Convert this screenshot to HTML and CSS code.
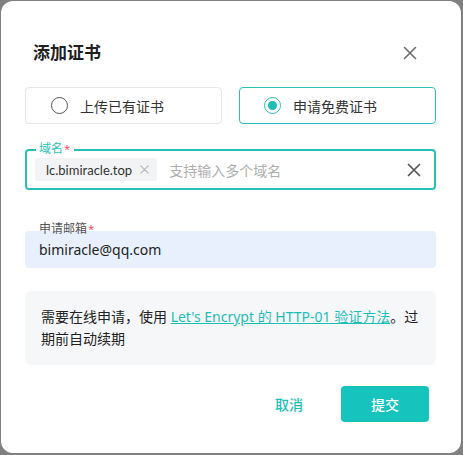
FILE: index.html
```html
<!DOCTYPE html>
<html lang="zh">
<head>
<meta charset="utf-8">
<link rel="stylesheet" href="styles.css">
</head>
<body>
<div class="dialog">
  <div class="header">
    <h1 class="title">添加证书</h1>
    <svg class="close" width="14" height="14" viewBox="0 0 14 14"><path d="M1.5 1.5L12.5 12.5M12.5 1.5L1.5 12.5" stroke="#6b6b6b" stroke-width="1.6" stroke-linecap="round"/></svg>
  </div>
  <div class="radios">
    <div class="radio-card">
      <span class="radio"></span>
      <span class="radio-label">上传已有证书</span>
    </div>
    <div class="radio-card selected">
      <span class="radio on"><span class="dot"></span></span>
      <span class="radio-label">申请免费证书</span>
    </div>
  </div>
  <div class="field domain">
    <span class="legend">域名<span class="req">*</span></span>
    <span class="chip">lc.bimiracle.top<svg class="chip-x" width="9" height="9" viewBox="0 0 9 9"><path d="M0.8 0.8L8.2 8.2M8.2 0.8L0.8 8.2" stroke="#b3b3b3" stroke-width="1.1" stroke-linecap="round"/></svg></span>
    <span class="placeholder">支持输入多个域名</span>
    <svg class="clear" width="14" height="14" viewBox="0 0 14 14"><path d="M1.5 1.5L12.5 12.5M12.5 1.5L1.5 12.5" stroke="#555" stroke-width="1.7" stroke-linecap="round"/></svg>
  </div>
  <div class="field email">
    <span class="email-label">申请邮箱<span class="req">*</span></span>
    <span class="email-value">bimiracle@qq.com</span>
  </div>
  <div class="info">需要在线申请，使用 <a class="link" href="#">Let's Encrypt 的 HTTP-01 验证方法</a>。过期前自动续期</div>
  <div class="footer">
    <button class="btn cancel">取消</button>
    <button class="btn submit">提交</button>
  </div>
</div>
</body>
</html>
```
FILE: styles.css
```css
html, body {
  margin: 0;
  padding: 0;
  background: #808080;
}
body {
  font-family: "Noto Sans", "Noto Sans CJK SC", sans-serif;
  width: 463px;
  height: 455px;
  overflow: hidden;
}
.dialog {
  box-sizing: border-box;
  margin: 1px 0 0 1px;
  width: 460px;
  height: 452px;
  background: #fff;
  border-radius: 12px;
  padding: 40px 25px 0 24px;
}
.header {
  display: flex;
  align-items: center;
  justify-content: space-between;
  height: 24px;
  padding: 0 19px 0 8px;
}
.title {
  margin: 0;
  font-size: 17px;
  font-weight: 600;
  color: #1f1f1f;
  line-height: 24px;
}
.close {
  display: block;
}
.radios {
  display: grid;
  grid-template-columns: 1fr 1fr;
  column-gap: 17px;
  margin-top: 22px;
}
.radio-card {
  box-sizing: border-box;
  height: 37px;
  border: 1px solid #e6e6e6;
  border-radius: 4px;
  display: flex;
  align-items: center;
  padding-left: 25px;
  gap: 12px;
}
.radio-card.selected {
  border-color: #2bbfb9;
  padding-left: 24px;
}
.radio {
  box-sizing: border-box;
  width: 17px;
  height: 17px;
  border: 1.6px solid #555;
  border-radius: 50%;
  display: flex;
  align-items: center;
  justify-content: center;
}
.radio.on {
  border: 1.6px solid #2bbfb9;
}
.dot {
  width: 9px;
  height: 9px;
  border-radius: 50%;
  background: #1fbfb8;
}
.radio-label {
  font-size: 14px;
  color: #333;
}
.field {
  position: relative;
  box-sizing: border-box;
  display: flex;
  align-items: center;
}
.domain {
  margin-top: 25px;
  height: 41px;
  border: 2px solid #2bbfb9;
  border-radius: 4px;
  padding: 0 13px 0 8px;
}
.legend {
  position: absolute;
  left: 9px;
  top: -10px;
  background: #fff;
  padding: 0 4px 0 3px;
  font-size: 12px;
  line-height: 16px;
  color: #2bbfb9;
}
.req {
  color: #f0506e;
  margin-left: 1px;
  font-size: 11px;
}
.chip {
  display: flex;
  align-items: center;
  height: 23px;
  background: #f2f3f5;
  border-radius: 3px;
  padding: 0 8px 0 11px;
  font-family: Lato, "Noto Sans", sans-serif;
  font-size: 13px;
  color: #333;
}
.chip-x {
  display: block;
  margin-left: 8px;
}
.placeholder {
  margin-left: 12px;
  font-size: 14px;
  color: #aeaeae;
  flex: 1;
}
.clear {
  display: block;
}
.email {
  margin-top: 41px;
  height: 37px;
  background: #e8f0fe;
  border-radius: 4px;
  padding-left: 14px;
}
.email-label {
  position: absolute;
  left: 14px;
  top: -10px;
  font-size: 12px;
  line-height: 16px;
  color: #555;
}
.email-value {
  font-size: 14px;
  color: #222;
}
.info {
  margin-top: 23px;
  background: #f6f7f9;
  border-radius: 6px;
  padding: 15px 16px 15px 16px;
  min-height: 44px;
  font-size: 14px;
  line-height: 22px;
  color: #222;
}
.link {
  color: #1fbfb8;
  text-decoration: underline;
}
.footer {
  display: flex;
  justify-content: flex-end;
  gap: 8px;
  margin-top: 21px;
  padding-right: 7px;
}
.btn {
  width: 88px;
  height: 36px;
  border: none;
  border-radius: 4px;
  font-family: inherit;
  font-size: 14px;
  font-weight: 500;
  cursor: pointer;
}
.cancel {
  background: transparent;
  color: #1fbfb8;
}
.submit {
  background: #17c3bd;
  color: #fff;
}
```
